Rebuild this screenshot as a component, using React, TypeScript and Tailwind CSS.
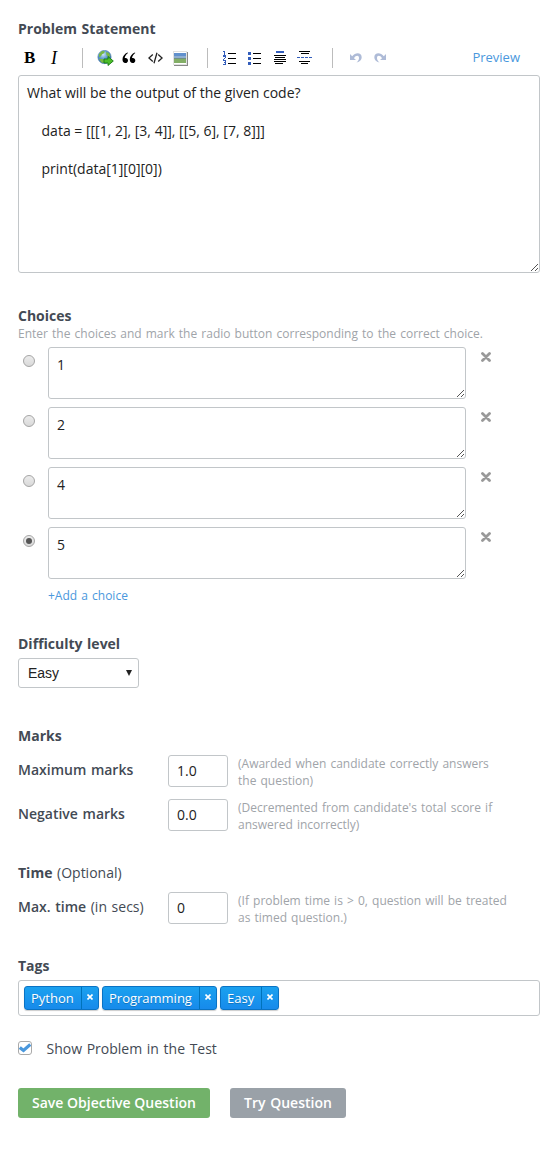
import type { ReactNode } from "react";

function Grip() {
  return (
    <svg className="absolute right-[1px] bottom-[1px]" width="7" height="7" viewBox="0 0 7 7" shapeRendering="crispEdges" fill="#555">
      {[0, 1, 2, 3, 4, 5, 6].map((i) => (
        <rect key={i} x={i} y={6 - i} width="1" height="1" />
      ))}
      {[0, 1, 2].map((i) => (
        <rect key={"s" + i} x={4 + i} y={6 - i} width="1" height="1" />
      ))}
    </svg>
  );
}

function Heading({ className, children }: { className: string; children: ReactNode }) {
  return <h2 className={"h-5 whitespace-nowrap text-[14px] leading-5 font-bold text-[#434a54] " + className}>{children}</h2>;
}

function Divider({ className }: { className: string }) {
  return <span className={"h-5 w-px shrink-0 bg-[#bcbcbc] " + className} />;
}

function Toolbar() {
  return (
    <div className="flex h-5 w-[522px] items-center">
      <b className="ml-[6px] w-[24px] font-['Liberation_Serif',serif] text-[17px] leading-5 text-black">B</b>
      <i className="ml-[3px] w-[31px] font-['Liberation_Serif',serif] text-[18px] leading-5 text-black">I</i>
      <Divider className="" />
      <svg className="ml-[14px]" width="17" height="16" viewBox="0 0 17 16">
        <defs>
          <radialGradient id="globe" cx="40%" cy="30%" r="75%">
            <stop offset="0" stopColor="#cfe6f6" />
            <stop offset="0.45" stopColor="#5f9bce" />
            <stop offset="1" stopColor="#205490" />
          </radialGradient>
        </defs>
        <circle cx="7.5" cy="7" r="6.6" fill="url(#globe)" stroke="#4d83b5" strokeWidth="0.7" />
        <path d="M2 4 5 1l3 .2-1 2-2 1-1 2-2 1zM9 2l3 1 1.500 3-2 1-2-2zM2 9l4 0 1.500 2-1 2-2-.5z" fill="#78b843" />
        <path d="M7 9h4V6.500L16.300 11 11 15.500V13H7z" fill="#4dbd29" stroke="#167b13" strokeWidth="0.9" />
      </svg>
      <svg className="ml-[8px]" width="14" height="12" viewBox="0 0 14 12" fill="#000">
        <path d="M6 1 5.600.4C2.800 1.500.5 4 .5 7.300.5 9.800 1.600 11 3.300 11S6 9.900 6 8.400 5 5.900 3.600 5.900c-.4 0-.7 0-.9.1C3 4 4.200 2.100 6 1zM13.300 1l-.4-.6C10.100 1.500 7.800 4 7.800 7.300c0 2.500 1.100 3.700 2.800 3.700s2.700-1.100 2.700-2.600-1-2.500-2.400-2.500c-.4 0-.7 0-.9.1.3-2 1.500-3.900 3.300-5z" />
      </svg>
      <svg className="ml-[12px]" width="15" height="12" viewBox="0 0 15 12" fill="none" stroke="#222" strokeWidth="1.300">
        <path d="M4.800 2.500.9 6l3.900 3.500M10.200 2.500 14.100 6l-3.900 3.500M9 .8 6 11.200" />
      </svg>
      <svg className="ml-[10px]" width="15" height="15" viewBox="0 0 15 15" shapeRendering="crispEdges">
        <path d="M0 0h14v14H0z" fill="#e1e1e1" />
        <path d="M1 1h12v12H1z" fill="#fff" />
        <path d="M14 1h1v14H1v-1h13z" fill="#888" />
        <path d="M1 2h12v5H1z" fill="#6190cd" />
        <path d="M1 5h12v2H1z" fill="#8faed1" />
        <path d="M1 7h12v5H1z" fill="#83ae66" />
        <path d="M1 7h12v1H1z" fill="#709084" />
      </svg>
      <Divider className="ml-[19px]" />
      <svg className="ml-[15px]" width="13" height="16" viewBox="0 0 13 16" shapeRendering="crispEdges">
        <path d="M5 3h8v1H5zM5 8h8v1H5zM5 13h8v1H5z" fill="#000" />
        <path d="M0 1h2v4H1V2H0zM0 5h3v1H0zM0 6h3v2H2v1H1v1h2v1H0V9h1V8h1V7H0zM0 11h3v4H0v-1h2v-1H1v-1h1v-1H0z" fill="#335dbb" />
      </svg>
      <svg className="ml-[12px]" width="13" height="16" viewBox="0 0 13 16" shapeRendering="crispEdges">
        <path d="M5 3h8v1H5zM5 8h8v1H5zM5 13h8v1H5z" fill="#000" />
        <path d="M0 2h3v3H0zM0 7h3v3H0zM0 12h3v3H0z" fill="#335dbb" />
      </svg>
      <svg className="ml-[13px]" width="12" height="16" viewBox="0 0 12 16" shapeRendering="crispEdges">
        <path d="M2 1h8v2H2z" fill="#335dbb" />
        <path d="M0 5h12v1H0zM1 7h10v1H1zM0 9h12v1H0zM0 11h12v1H0zM1 13h8v1H1z" fill="#000" />
      </svg>
      <svg className="ml-[11px]" width="15" height="16" viewBox="0 0 15 16" shapeRendering="crispEdges">
        <path d="M2 1h11v1H2zM4 3h8v1H4zM2 11h11v1H2zM4 13h7v1H4z" fill="#000" />
        <path d="M0 7h3v1H0zM4 7h3v1H4zM8 7h3v1H8zM12 7h3v1h-3z" fill="#335dbb" />
      </svg>
      <Divider className="ml-[20px]" />
      <svg className="ml-[17px]" width="12" height="12" viewBox="0 0 12 12" fill="#aebbd7">
        <path d="M0 2v6h6L4 6.200C6 3 9 3.200 9 6c0 1.800-.8 3-2.500 4.500C10 9.800 11.700 8 11.700 5.300 11.700.5 5.500-.2 2.200 4.300z" />
      </svg>
      <svg className="ml-[12px]" width="12" height="12" viewBox="0 0 12 12" fill="#aebbd7">
        <path d="M12 2v6H6l2-1.800C6 3 3 3.200 3 6c0 1.800.8 3 2.500 4.500C2 9.800.3 8 .3 5.300.3.500 6.500-.2 9.800 4.300z" />
      </svg>
      <a className="relative -top-px mr-[20px] ml-auto text-[13px] leading-5 text-[#4a98dd]">Preview</a>
    </div>
  );
}

function Radio({ checked }: { checked: boolean }) {
  return (
    <span className="mt-[8px] flex size-[12px] items-center justify-center rounded-full border border-[#a5a5a5] bg-linear-to-b from-[#ececec] to-[#d9d9d9]">
      {checked && <span className="size-[6px] rounded-full bg-[#555]" />}
    </span>
  );
}

function Choice({ value, checked = false }: { value: string; checked?: boolean }) {
  return (
    <div className="flex h-[60px]">
      <div className="w-[30px] pl-[5px]">
        <Radio checked={checked} />
      </div>
      <div className="relative h-[52px] w-[418px] rounded-[3px] border border-[#c2c6c9] px-2 pt-[7px] text-[14px] leading-5 text-[#222]">
        {value}
        <Grip />
      </div>
      <svg className="mt-[5px] ml-[15px]" width="10" height="10" viewBox="0 0 10 10" stroke="#999" strokeWidth="2.800" strokeLinecap="round">
        <path d="M1.500 1.500l7 7M8.500 1.500l-7 7" />
      </svg>
    </div>
  );
}

function NumberRow({ label, value, hint, className }: { label: ReactNode; value: string; hint: ReactNode; className: string }) {
  return (
    <div className={"flex h-8 " + className}>
      <label className="w-[150px] pt-[5px] text-[14px] leading-5 whitespace-nowrap text-[#434a54]">{label}</label>
      <input className="h-8 w-[60px] rounded-[3px] border border-[#c2c6c9] px-2 pb-[2px] text-[14px] text-[#222]" defaultValue={value} />
      <p className="ml-[10px] text-[12px] leading-[17px] whitespace-nowrap text-[#a0a4a9]">{hint}</p>
    </div>
  );
}

function Tag({ label, className }: { label: string; className: string }) {
  return (
    <span className={"flex h-6 rounded-[3px] border border-[#0a73c4] bg-linear-to-b from-[#1ba1ef] to-[#178aeb] text-white shadow-[0_1px_1px_rgba(0,0,0,0.2)] " + className}>
      <span className="grow pl-[6px] text-[13px] leading-[23px] [text-shadow:0_1px_0_rgba(0,51,83,0.3)]">{label}</span>
      <span className="flex w-[17px] items-center justify-center border-l border-[#0073bb] pb-[2px]">
        <svg width="6" height="6" viewBox="0 0 6 6" stroke="#fff" strokeWidth="1.600">
          <path d="M.5.5l5 5M5.500.5l-5 5" />
        </svg>
      </span>
    </span>
  );
}

export default function App() {
  return (
    <main className="h-[1150px] w-[554px] bg-white pt-[19px] pl-[18px] font-['Open_Sans',sans-serif] text-[#434a54] [word-spacing:1px]">
      <Heading className="">Problem Statement</Heading>
      <div className="mt-[9px]">
        <Toolbar />
      </div>
      <div className="relative mt-[7px] h-[198px] w-[522px] rounded-[3px] border border-[#c2c6c9] px-2 pt-[7px] text-[14px] leading-[19px] whitespace-pre text-[#222] [word-spacing:0px]">
        {"What will be the output of the given code?\n\n    data = [[[1, 2], [3, 4]], [[5, 6], [7, 8]]]\n\n    print(data[1][0][0])"}
        <Grip />
      </div>

      <Heading className="mt-[33px]">Choices</Heading>
      <p className="mt-[-2px] h-[23px] text-[12px] leading-5 whitespace-nowrap text-[#a0a4a9]">
        Enter the choices and mark the radio button corresponding to the correct choice.
      </p>
      <Choice value="1" />
      <Choice value="2" />
      <Choice value="4" />
      <Choice value="5" checked />
      <a className="-mt-px ml-[30px] block h-5 text-[12px] leading-5 text-[#4a98dd]">+Add a choice</a>

      <Heading className="mt-[28px]">Difficulty level</Heading>
      <div className="mt-1 flex h-[30px] w-[121px] items-center justify-between rounded-[3px] border border-[#c2c6c9] pr-[6px] pl-[9px] font-['Liberation_Sans',sans-serif] text-[14px] text-[#222]">
        Easy
        <svg width="6" height="6" viewBox="0 0 6 6" fill="#222">
          <path d="M0 0h6L3 6z" />
        </svg>
      </div>

      <Heading className="mt-[38px]">Marks</Heading>
      <NumberRow
        className="mt-[9px]"
        label={<span className="font-semibold">Maximum marks</span>}
        value="1.0"
        hint={<>(Awarded when candidate correctly answers<br />the question)</>}
      />
      <NumberRow
        className="mt-[12px]"
        label={<span className="font-semibold">Negative marks</span>}
        value="0.0"
        hint={<>(Decremented from candidate's total score if<br />answered incorrectly)</>}
      />

      <Heading className="mt-[32px]">
        Time <span className="font-normal">(Optional)</span>
      </Heading>
      <NumberRow
        className="mt-[9px]"
        label={<><span className="font-semibold">Max. time</span> (in secs)</>}
        value="0"
        hint={<>(If problem time is &gt; 0, question will be treated<br />as timed question.)</>}
      />

      <Heading className="mt-[32px]">Tags</Heading>
      <div className="mt-1 flex h-9 w-[522px] gap-[3px] rounded-[3px] border border-[#c2c6c9] p-[5px]">
        <Tag label="Python" className="w-[75px]" />
        <Tag label="Programming" className="w-[115px]" />
        <Tag label="Easy" className="w-[59px]" />
      </div>

      <div className="mt-[23px] flex h-5 items-center">
        <span className="mb-[2px] flex size-[14px] items-center justify-center rounded-[3px] border border-[#aaa] bg-white">
          <svg width="12" height="10" viewBox="0 0 12 10" fill="none" stroke="#4a98dd" strokeWidth="3.200">
            <path d="M.8 4.500 4.500 7.500 11.300 1.500" />
          </svg>
        </span>
        <span className="ml-[14.5px] text-[14px] leading-5">Show Problem in the Test</span>
      </div>

      <div className="mt-[29px] flex gap-5 text-[14px] leading-[30px] font-semibold text-white [word-spacing:0px]">
        <button className="h-[30px] w-[192px] rounded-[3px] bg-[#72b26a]">Save Objective Question</button>
        <button className="h-[30px] w-[116px] rounded-[3px] bg-[#9aa1a8] [word-spacing:1px]">Try Question</button>
      </div>
    </main>
  );
}
